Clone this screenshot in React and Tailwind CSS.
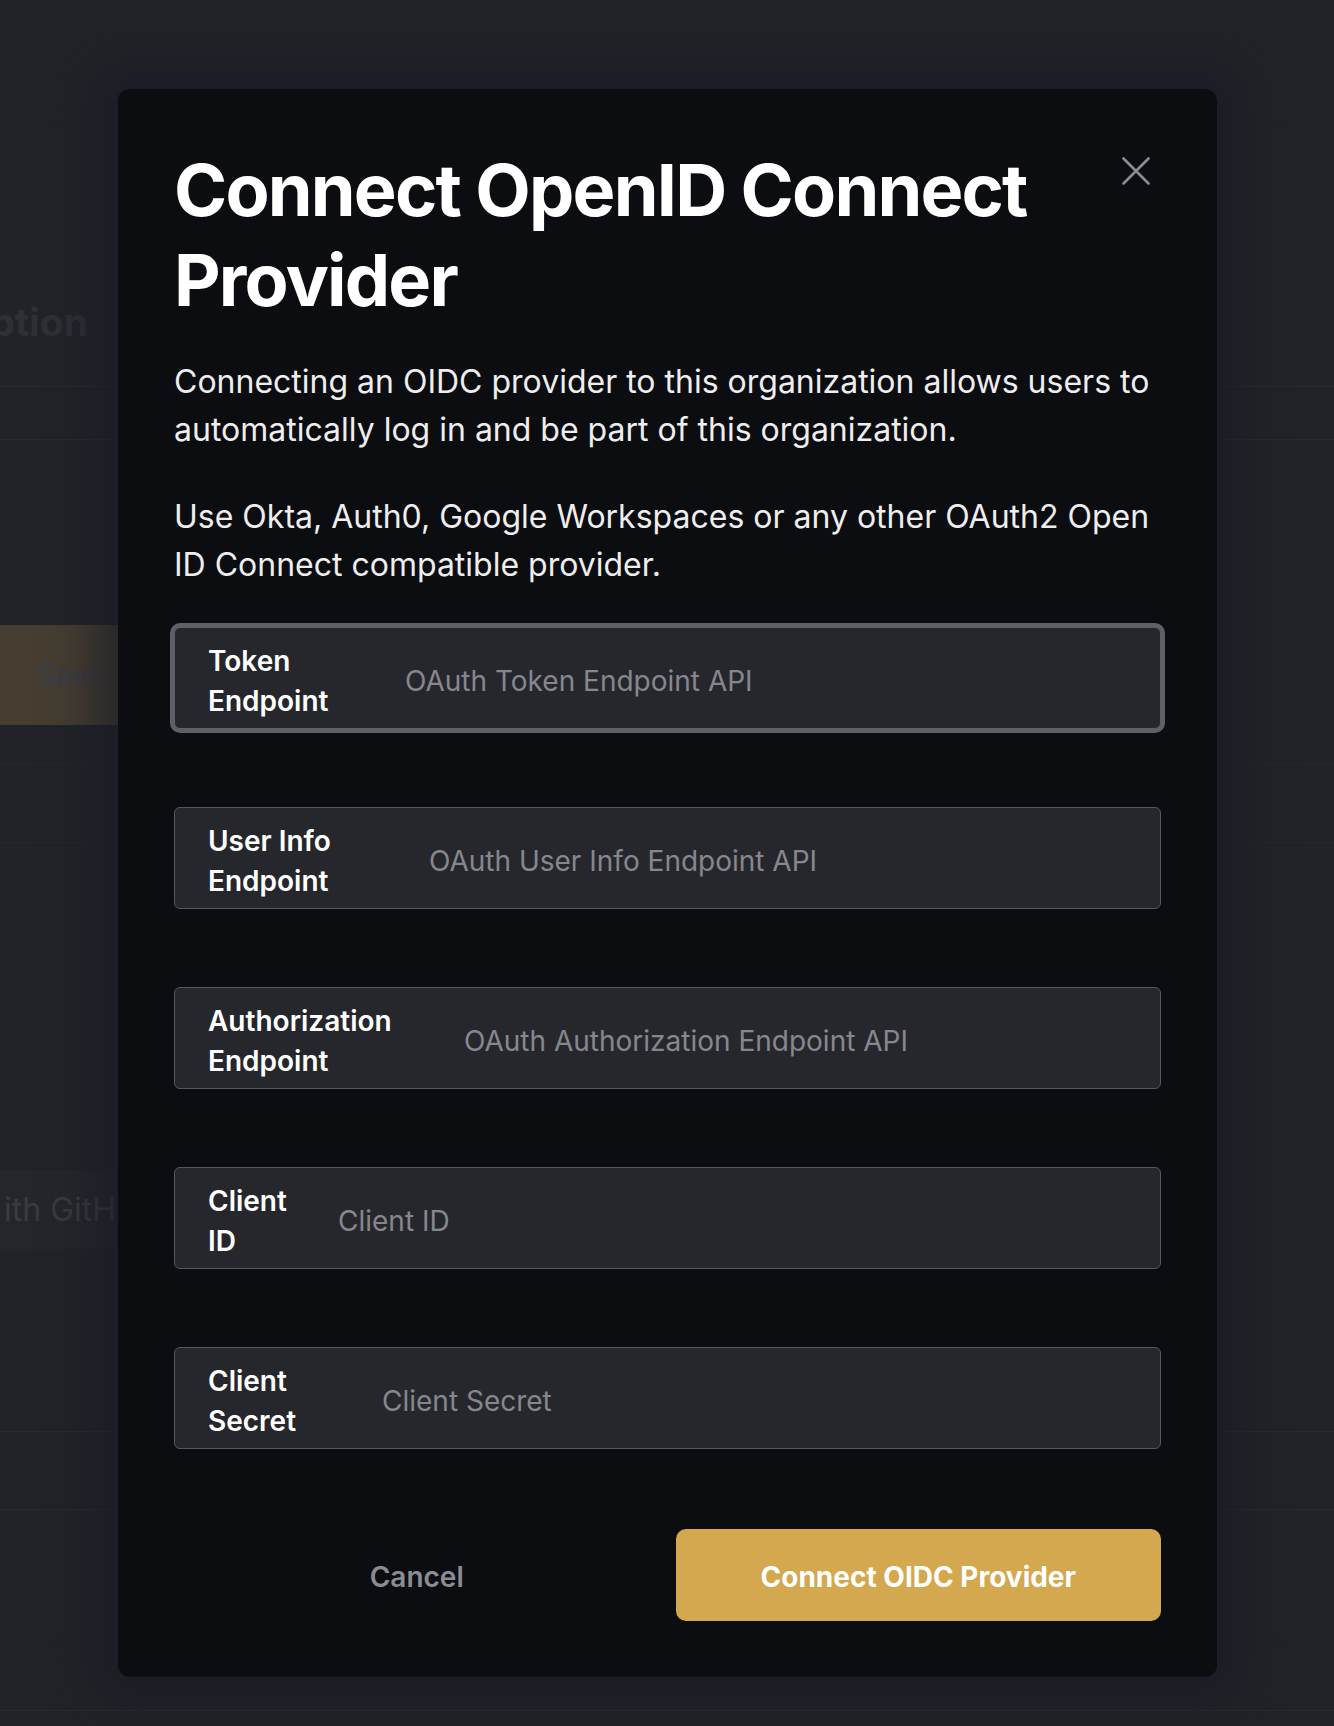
import React from "react";

const fields = [
  { l1: "Token", l2: "Endpoint", ph: "OAuth Token Endpoint API", w: "w-[197px]", focus: true },
  { l1: "User Info", l2: "Endpoint", ph: "OAuth User Info Endpoint API", w: "w-[221px]" },
  { l1: "Authorization", l2: "Endpoint", ph: "OAuth Authorization Endpoint API", w: "w-[256px]" },
  { l1: "Client", l2: "ID", ph: "Client ID", w: "w-[130px]" },
  { l1: "Client", l2: "Secret", ph: "Client Secret", w: "w-[174px]" },
];

function Field({ f }) {
  return (
    <div
      className={
        "flex h-[102px] items-center rounded-[6px] border bg-[#26272d] pl-[33px] pt-[5px] " +
        (f.focus ? "border-[#5e6068] ring-[4px] ring-[#5e6068]" : "border-[#55575d]")
      }
    >
      <label className={"shrink-0 text-[28px] font-semibold leading-[40px] text-white " + f.w}>
        <span className="block">{f.l1}</span>
        <span className="block">{f.l2}</span>
      </label>
      <input
        placeholder={f.ph}
        className="min-w-0 flex-1 bg-transparent pr-4 text-[28px] text-white outline-none placeholder:text-[#86878e]"
      />
    </div>
  );
}

export default function App() {
  return (
    <div className="relative h-[1726px] w-full overflow-hidden bg-[#222328] font-['Inter','Noto_Sans',sans-serif]">
      {/* dimmed page behind */}
      <div className="flex flex-col">
        <div className="h-[292px]" />
        <div className="flex h-[95px] items-start border-b border-[#2a2b30] pt-[6px]">
          <div className="flex w-[88px] justify-end overflow-hidden">
            <span className="shrink-0 text-[39px] font-bold leading-[48px] text-[#2f3036]">Option</span>
          </div>
        </div>
        <div className="h-[53px] border-b border-[#2a2b30]" />
        <div className="h-[185px]" />
        <div className="flex h-[100px] w-[118px] items-center justify-end bg-[#463e31] pr-[14px]">
          <span className="text-[28px] font-bold text-[#3d3e43]">Save</span>
        </div>
        <div className="h-[40px] border-b border-[#26272c]" />
        <div className="h-[78px] border-b border-[#26272c]" />
        <div className="h-[327px]" />
        <div className="flex h-[79px] w-[118px] items-center justify-end bg-[#25262b]">
          <span className="shrink-0 pr-[2px] text-[32px] leading-[40px] text-[#3a3b40]">ith GitH</span>
        </div>
        <div className="h-[183px] border-b border-[#2a2b30]" />
        <div className="h-[78px] border-b border-[#2a2b30]" />
        <div className="h-[201px] border-b border-[#2a2b30]" />
      </div>

      {/* modal */}
      <div className="absolute left-[118px] top-[89px] w-[1099px] rounded-[12px] bg-[#0c0d10] p-14 shadow-[0_0_50px_25px_rgba(24,27,38,0.7)]">
        <button className="absolute right-[67px] top-[68px] text-[#8a8b90]" aria-label="Close">
          <svg width="28" height="28" viewBox="0 0 28 28" fill="none" stroke="currentColor" strokeWidth="2.6" strokeLinecap="round">
            <path d="M1.5 1.5L26.5 26.5M26.5 1.5L1.5 26.5" />
          </svg>
        </button>
        <h2 className="pr-[60px] text-[72px] font-bold leading-[90px] tracking-[-0.025em] text-white">
          Connect OpenID Connect Provider
        </h2>
        <p className="mt-[33px] text-[32px] leading-[48px] text-[#eeeeee]">
          Connecting an OIDC provider to this organization allows users to automatically log in and be part of this
          organization.
        </p>
        <p className="mt-[39px] text-[32px] leading-[48px] text-[#eeeeee]">
          Use Okta, Auth0, Google Workspaces or any other OAuth2 Open ID Connect compatible provider.
        </p>
        <div className="mt-[38px] flex flex-col gap-[78px]">
          {fields.map((f) => (
            <Field key={f.ph} f={f} />
          ))}
        </div>
        <div className="mt-[80px] grid grid-cols-2 gap-4">
          <button className="h-[92px] pt-[4px] text-[28px] font-semibold text-[#8b8c92]">Cancel</button>
          <button className="h-[92px] rounded-[10px] bg-[#d4a84f] pt-[4px] text-[28px] font-bold text-white">
            Connect OIDC Provider
          </button>
        </div>
      </div>
    </div>
  );
}
